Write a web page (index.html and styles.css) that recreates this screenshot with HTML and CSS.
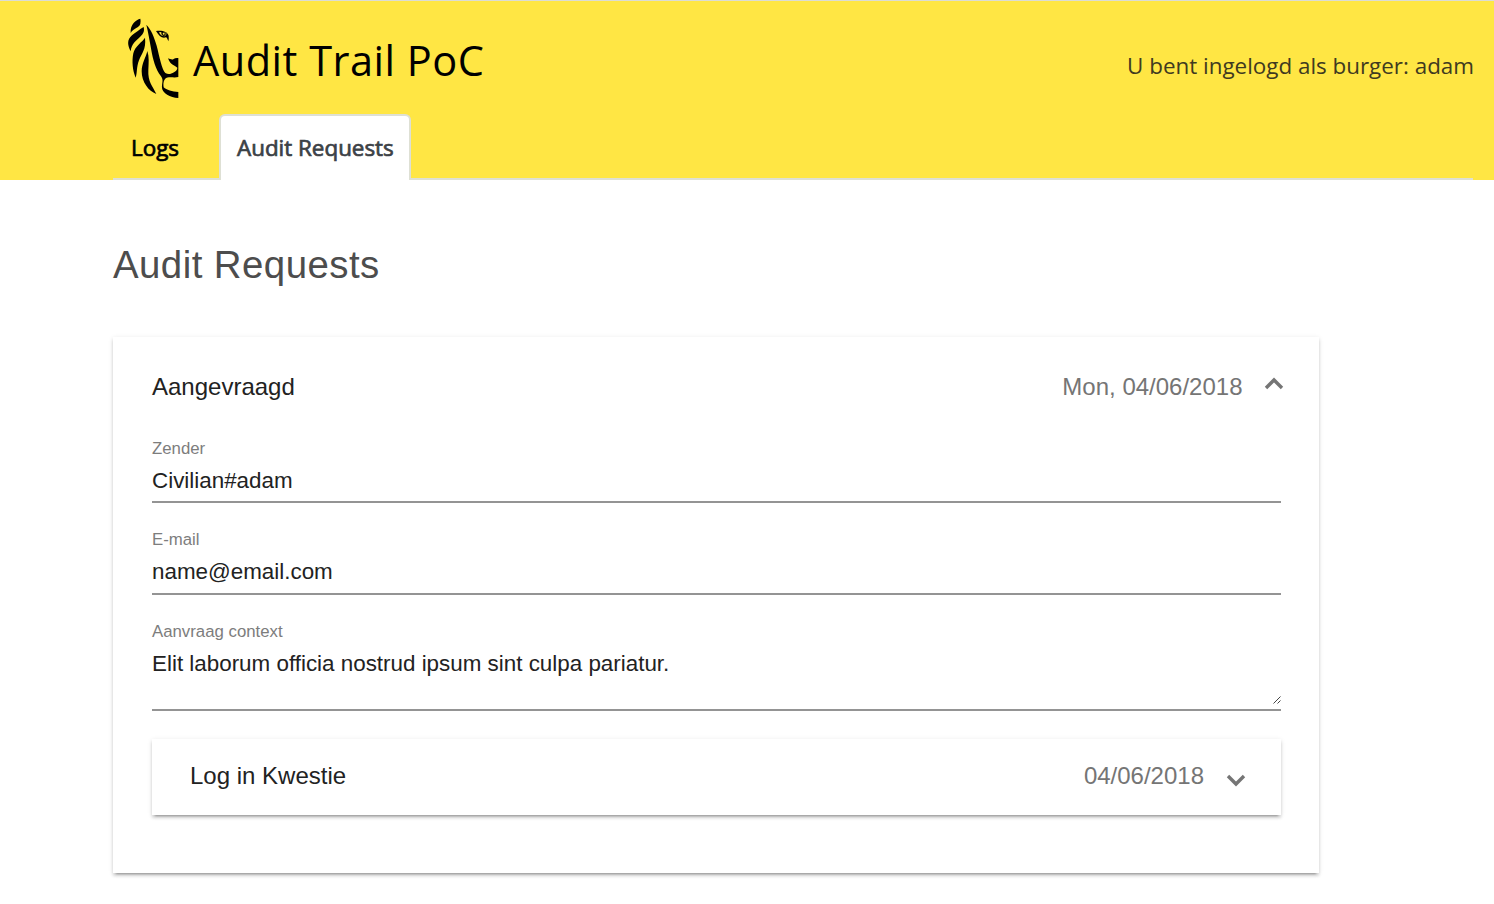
FILE: index.html
```html
<!DOCTYPE html>
<html lang="nl">
<head>
<meta charset="utf-8">
<title>Audit Trail PoC</title>
<link rel="stylesheet" href="styles.css">
</head>
<body>
<header class="header">
  <div class="topbar">
    <div class="brand">
      <svg class="lion" viewBox="36 24 159 243" aria-hidden="true">
        <path d="M76 26 C63 29 45 43 47 69 C56 53 73 54 76 41 Q78 34 76 26Z"/>
        <path d="M86 51 C74 58 63 67 51 76 C38 87 35 101 47 124 C50 100 63 93 77 79 C88 67 88 61 86 51Z"/>
        <path d="M90 83 C83 95 59 109 55 130 C50 154 53 182 62 203 C67 189 64 172 72 151 C79 131 94 119 90 83Z"/>
        <path d="M97 123 C93 142 80 160 80 184 C80 216 101 244 124 252 C113 227 98 216 100 179 C101 160 103 141 97 123Z"/>
        <path d="M94 44 C109 59 117 80 125 107 C134 142 140 177 151 189 C160 195 168 192 177 187 C184 183 187 178 187 173 C181 167 166 166 159 145 C166 147 171 151 176 147 Q180 143 190 144 L190 201 C177 205 159 198 150 207 C144 214 145 225 146 232 C154 240 172 245 190 246 L190 264 C165 264 142 248 141 234 C140 220 147 211 138 199 C121 178 114 148 109 121 C104 91 99 65 94 44Z"/>
        <path fill-rule="evenodd" d="M123 63 C139 60 157 63 161 77 Q162 87 160 94 C157 87 157 84 153 82 C141 86 132 78 123 63Z M132 67 Q137 79 149 79 Q156 75 154 69 Q144 64 132 67Z"/>
        <path d="M139 66 Q148 65 152 69 Q153 78 146 78 Q138 76 139 66Z"/>
        <circle class="glint" cx="146" cy="71" r="3"/>
      </svg>
      <span class="brand-name">Audit Trail PoC</span>
    </div>
    <span class="user">U bent ingelogd als burger: adam</span>
  </div>
  <nav class="tabs">
    <a class="tab">Logs</a>
    <a class="tab tab-active">Audit Requests</a>
  </nav>
</header>
<main class="content">
  <h1 class="title">Audit Requests</h1>
  <section class="panel">
    <div class="panel-header">
      <span>Aangevraagd</span>
      <span class="date">Mon, 04/06/2018</span>
      <svg class="chevron chevron-up" viewBox="0 0 20 13"><path d="M2 11 L10 3 L18 11"/></svg>
    </div>
    <div class="field"><span class="label">Zender</span><span class="value">Civilian#adam</span></div>
    <div class="field field-email"><span class="label">E-mail</span><span class="value">name@email.com</span></div>
    <div class="field field-area"><span class="label">Aanvraag context</span><span class="value">Elit laborum officia nostrud ipsum sint culpa pariatur.</span>
      <svg class="grip" viewBox="0 0 8 8"><path d="M.5 7.5 L7.5 .5 M4.5 7.5 L7.5 4.5"/></svg>
    </div>
    <section class="panel subpanel">
      <span>Log in Kwestie</span>
      <span class="date">04/06/2018</span>
      <svg class="chevron chevron-down" viewBox="0 0 20 13"><path d="M2 2 L10 10 L18 2"/></svg>
    </section>
  </section>
</main>
</body>
</html>
```
FILE: styles.css
```css
* { box-sizing: border-box; }
body {
  margin: 0;
  min-height: 100vh;
  background: #fff;
  color: #222;
  font-family: "Liberation Sans", Arial, sans-serif;
}
.header {
  height: 180px;
  padding: 1px 20px 0 113px;
  background: #ffe644;
  border-top: 1px solid #dcdcd4;
  font-family: "Open Sans", sans-serif;
}
.topbar {
  display: flex;
  justify-content: space-between;
  height: 112px;
}
.brand { display: flex; padding: 16px 0 0 14px; gap: 13px; }
.lion { width: 53px; height: 81px; }
.lion .glint { fill: #ffe644; }
.brand-name { font-size: 41.5px; line-height: 56px; padding-top: 14px; letter-spacing: .5px; color: #000; white-space: nowrap; }
.user { font-size: 22.4px; line-height: 30px; padding-top: 49px; color: #403a20; white-space: nowrap; }
.tabs {
  display: flex;
  gap: 24px;
  height: 66px;
  margin-right: 1px;
  border-bottom: 2px solid #dee0d4;
}
.tab {
  height: 66px;
  padding: 17px 16px 0 18px;
  color: #000;
  font-size: 22.4px;
  line-height: 33px;
  -webkit-text-stroke: .7px currentColor;
  white-space: nowrap;
}
.tab-active {
  width: 192px;
  padding: 15px 0 0 16px;
  background: #fff;
  color: #3c4146;
  border: 2px solid #dee0d4;
  border-bottom: 0;
  border-radius: 6px 6px 0 0;
}
.content { min-height: 724px; padding: 61px 175px 0 113px; }
.title {
  margin: 0 0 48px;
  font-size: 38.4px;
  font-weight: 400;
  line-height: 48px;
  letter-spacing: .45px;
  color: #4d4d4d;
}
.panel {
  height: 536px;
  padding: 30px 38px 0 39px;
  background: #fff;
  box-shadow: 0 4px 2px -3px rgba(0,0,0,.28), 0 3px 3px rgba(0,0,0,.14), 0 1px 5px rgba(0,0,0,.1);
}
.panel-header {
  display: flex;
  align-items: center;
  height: 40px;
  margin-bottom: 30px;
  font-size: 24px;
}
.date { margin-left: auto; color: #757575; }
.chevron { width: 20px; height: 13px; fill: none; stroke: #757575; stroke-width: 3.4; }
.chevron-up { margin: 0 -3.4px 7px 21.9px; }
.chevron-down { margin: 9px -3.4px 0 22.4px; }
.field {
  position: relative;
  display: flex;
  flex-direction: column;
  height: 66px;
  margin-bottom: 25px;
  border-bottom: 2px solid #949494;
}
.field-email { height: 67px; }
.field-area { height: 91px; margin-bottom: 28px; }
.label { font-size: 16.8px; line-height: 24px; color: #7d7d7d; }
.value { font-size: 22.4px; line-height: 28px; padding-top: 6px; }
.grip { position: absolute; right: 0; bottom: 5px; width: 8px; height: 8px; fill: none; stroke: #444; stroke-width: 1; }
.subpanel {
  display: flex;
  align-items: center;
  height: 76px;
  padding: 0 38px 2px;
  font-size: 24px;
}
```
